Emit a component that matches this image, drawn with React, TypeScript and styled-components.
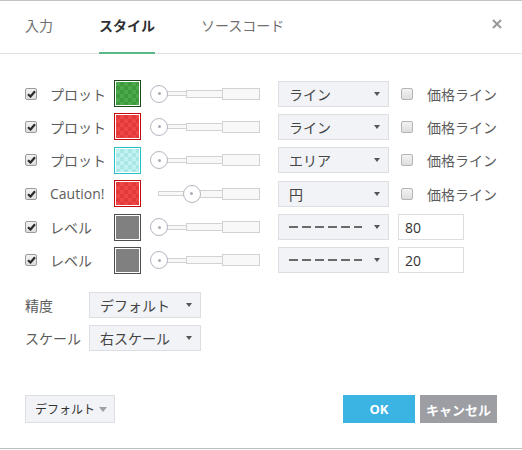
import React from "react";
import styled, { createGlobalStyle } from "styled-components";

const Global = createGlobalStyle`
  html, body { margin: 0; padding: 0; background: #fff; }
  body { font-family: "Open Sans", "Noto Sans CJK JP", sans-serif; }
  * { box-sizing: border-box; }
`;

const Dialog = styled.div`
  width: 522px;
  height: 449px;
  border-top: 1px solid #c4c4c4;
  border-bottom: 1px solid #bdbdbd;
  display: flex;
  flex-direction: column;
  background: #fff;
  color: #555;
`;

const Header = styled.div`
  height: 53px;
  border-bottom: 1px solid #e2e2e2;
  display: flex;
  align-items: stretch;
  padding: 0 20px 0 25px;
`;

const Tab = styled.div<{ $active?: boolean }>`
  position: relative;
  display: flex;
  align-items: center;
  padding-bottom: 4px;
  margin-right: 46px;
  font-size: 14px;
  font-weight: ${(p) => (p.$active ? 700 : 400)};
  color: ${(p) => (p.$active ? "#2f3033" : "#707070")};
  border-bottom: 2px solid ${(p) => (p.$active ? "#5ab88b" : "transparent")};
  margin-bottom: -1px;
`;

const Close = styled.div`
  margin-left: auto;
  display: flex;
  align-items: center;
  padding-bottom: 6px;
`;

const Body = styled.div`
  padding: 26px 25px 0 25px;
  display: flex;
  flex-direction: column;
`;

const Rows = styled.div`
  display: flex;
  flex-direction: column;
  gap: 7.4px;
`;

const Row = styled.div`
  display: grid;
  grid-template-columns: 25px 64px 36px 128px 120px 1fr;
  align-items: center;
  height: 26px;
`;

const Box = styled.span<{ $checked?: boolean }>`
  width: 12px;
  height: 12px;
  border: 1px solid ${(p) => (p.$checked ? "#9a9a9a" : "#b4b4b4")};
  border-radius: 2px;
  background: linear-gradient(#f2f2f2, #dedede);
  display: inline-flex;
  align-items: center;
  justify-content: center;
`;

const Label = styled.span`
  font-size: 14px;
  color: #5c5c5c;
  white-space: nowrap;
`;

const Swatch = styled.div<{ $border: string; $a: string; $b: string }>`
  width: 27px;
  height: 27px;
  border: 1px solid ${(p) => p.$border};
  padding: 1px;
  background: #fff;
  & > div {
    width: 100%;
    height: 100%;
    background: conic-gradient(${(p) => p.$a} 25%, ${(p) => p.$b} 0 50%, ${(p) => p.$a} 0 75%, ${(p) => p.$b} 0) 0 0 / 8px 8px;
  }
`;

const Slider = styled.div`
  position: relative;
  width: 110px;
  height: 18px;
  display: flex;
  align-items: center;
  padding-left: 9px;
`;

const Seg = styled.div<{ $w: number; $h: number }>`
  width: ${(p) => p.$w}px;
  height: ${(p) => p.$h}px;
  border: 1px solid #d2d2d2;
  background: #f8f8f8;
  margin-left: -1px;
`;

const Knob = styled.div`
  position: absolute;
  top: 0;
  width: 18px;
  height: 18px;
  border-radius: 50%;
  border: 1px solid #b3b7c0;
  background: #fff;
  display: flex;
  align-items: center;
  justify-content: center;
  &::after {
    content: "";
    width: 3px;
    height: 3px;
    border-radius: 50%;
    background: #a9acb3;
  }
`;

const Select = styled.div<{ $w?: number }>`
  width: ${(p) => p.$w ?? 111}px;
  height: 26px;
  background: #f2f3f7;
  border: 1px solid #dcdee2;
  display: flex;
  align-items: center;
  padding: 0 8px 0 10px;
  font-size: 14px;
  color: #444;
`;

const SelText = styled.span`
  flex: 1;
  white-space: nowrap;
`;

const Arrow = styled.span<{ $size?: number; $color?: string }>`
  flex: none;
  width: 0;
  height: 0;
  border-left: ${(p) => (p.$size ?? 7) / 2}px solid transparent;
  border-right: ${(p) => (p.$size ?? 7) / 2}px solid transparent;
  border-top: ${(p) => Math.round((p.$size ?? 7) * 0.6)}px solid ${(p) => p.$color ?? "#555"};
`;

const Dashes = styled.span`
  flex: 1;
  height: 2px;
  margin-right: 12px;
  background: repeating-linear-gradient(90deg, #6a6a6a 0 9px, transparent 9px 13px);
`;

const Extra = styled.div`
  display: flex;
  align-items: center;
  gap: 14px;
  padding-left: 3px;
`;

const NumInput = styled.div`
  width: 66px;
  height: 26px;
  border: 1px solid #dcdee2;
  background: #fff;
  display: flex;
  align-items: center;
  padding-left: 6px;
  font-size: 14px;
  color: #333;
`;

const Settings = styled.div`
  margin-top: 18.6px;
  display: flex;
  flex-direction: column;
  gap: 7.4px;
`;

const SettingRow = styled.div`
  display: grid;
  grid-template-columns: 64px auto;
  align-items: center;
  height: 26px;
`;

const Footer = styled.div`
  margin-top: auto;
  padding: 0 25px 25px 25px;
  display: flex;
  align-items: center;
  gap: 5px;
`;

const DefaultBtn = styled.div`
  width: 90px;
  height: 28px;
  background: #f2f3f7;
  border: 1px solid #dcdee2;
  display: flex;
  align-items: center;
  padding: 0 8px 0 9px;
  font-size: 12px;
  color: #333;
  margin-right: auto;
  gap: 4px;
`;

const Btn = styled.div<{ $bg: string; $w: number }>`
  width: ${(p) => p.$w}px;
  height: 28px;
  background: ${(p) => p.$bg};
  color: #fff;
  font-weight: 700;
  font-size: 13px;
  display: flex;
  align-items: center;
  justify-content: center;
`;

const Check = () => (
  <Box $checked>
    <svg width="9" height="8" viewBox="0 0 9 8">
      <path d="M1 4.2 L3.5 6.5 L8 1.2" stroke="#2a2a2a" strokeWidth="2.2" fill="none" />
    </svg>
  </Box>
);

type RowData = {
  label: string;
  border: string;
  a: string;
  b: string;
  value: number;
  kind: string;
  level?: string;
};

const rows: RowData[] = [
  { label: "プロット", border: "#1c4a1c", a: "#3d9a3d", b: "#4aa94a", value: 0, kind: "ライン" },
  { label: "プロット", border: "#c20a0a", a: "#ef4545", b: "#e23a3a", value: 0, kind: "ライン" },
  { label: "プロット", border: "#27c0c8", a: "#a9e7e7", b: "#c2f1f1", value: 0, kind: "エリア" },
  { label: "Caution!", border: "#c20a0a", a: "#ef4545", b: "#e23a3a", value: 0.325, kind: "円" },
  { label: "レベル", border: "#4e4e4e", a: "#808080", b: "#808080", value: 0, kind: "", level: "80" },
  { label: "レベル", border: "#4e4e4e", a: "#808080", b: "#808080", value: 0, kind: "", level: "20" },
];

export default function App() {
  return (
    <>
      <Global />
      <Dialog>
        <Header>
          <Tab>入力</Tab>
          <Tab $active>スタイル</Tab>
          <Tab>ソースコード</Tab>
          <Close>
            <svg width="10" height="10" viewBox="0 0 10 10">
              <path d="M1 1 L9 9 M9 1 L1 9" stroke="#9a9a9a" strokeWidth="2" />
            </svg>
          </Close>
        </Header>
        <Body>
          <Rows>
            {rows.map((r, i) => (
              <Row key={i}>
                <Check />
                <Label>{r.label}</Label>
                <Swatch $border={r.border} $a={r.a} $b={r.b}>
                  <div />
                </Swatch>
                <Slider>
                  <Seg $w={29} $h={5} />
                  <Seg $w={37} $h={8} />
                  <Seg $w={38} $h={12} />
                  <Knob style={{ left: `${r.value * 101}px` }} />
                </Slider>
                <Select>
                  {r.level ? <Dashes /> : <SelText>{r.kind}</SelText>}
                  <Arrow />
                </Select>
                {r.level ? (
                  <NumInput>{r.level}</NumInput>
                ) : (
                  <Extra>
                    <Box />
                    <Label>価格ライン</Label>
                  </Extra>
                )}
              </Row>
            ))}
          </Rows>
          <Settings>
            <SettingRow>
              <Label>精度</Label>
              <Select $w={112}>
                <SelText>デフォルト</SelText>
                <Arrow />
              </Select>
            </SettingRow>
            <SettingRow>
              <Label>スケール</Label>
              <Select $w={112}>
                <SelText>右スケール</SelText>
                <Arrow />
              </Select>
            </SettingRow>
          </Settings>
        </Body>
        <Footer>
          <DefaultBtn>
            <SelText>デフォルト</SelText>
            <Arrow $size={9} $color="#a0a0a0" />
          </DefaultBtn>
          <Btn $bg="#3bb3e3" $w={72}>OK</Btn>
          <Btn $bg="#9c9ea4" $w={77}>キャンセル</Btn>
        </Footer>
      </Dialog>
    </>
  );
}
